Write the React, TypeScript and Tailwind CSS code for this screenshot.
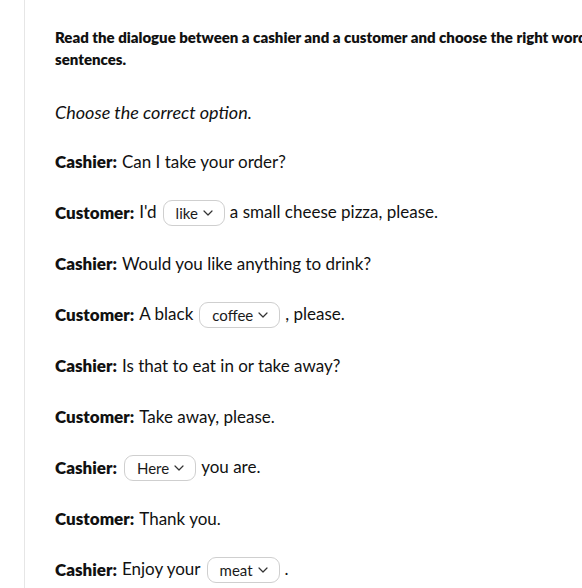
import React from "react";

function Sel({ v, first }: { v: string; first?: boolean }) {
  return (
    <span
      className={
        first
          ? "inline-flex items-center gap-[5px] h-[26px] pl-[12px] pr-[11px] ml-[2px] mr-[5px] rounded-[9px] border border-[#cfcfcf] bg-white text-[15px] text-[#1a1a1a] align-middle leading-none"
          : "inline-flex items-center gap-[5px] h-[26px] pl-[12px] pr-[11px] ml-[6px] mr-[5px] rounded-[9px] border border-[#cfcfcf] bg-white text-[15px] text-[#1a1a1a] align-middle leading-none"
      }
    >
      {v}
      <svg width="10" height="6" viewBox="0 0 10 6" fill="none">
        <path d="M1 1l4 4 4-4" stroke="#333" strokeWidth="1.2" strokeLinecap="round" strokeLinejoin="round" />
      </svg>
    </span>
  );
}

function Row({ who, children }: { who: string; children: React.ReactNode }) {
  return (
    <p className="h-[51px] flex items-center whitespace-nowrap">
      <b className="font-extrabold mr-[5px]">{who}:</b>
      <span>{children}</span>
    </p>
  );
}

export default function App() {
  return (
    <div className="w-[582px] h-[588px] overflow-hidden bg-white" style={{ fontFamily: "Lato, 'Noto Sans', sans-serif" }}>
      <div className="ml-[24px] border-l border-[#e6e6e6] h-full pl-[30px] pt-[26px] w-[760px] text-[#111]">
        <p className="font-extrabold text-[15px] leading-[22px] w-[690px]">
          Read the dialogue between a cashier and a customer and choose the right words to complete the sentences.
        </p>
        <p className="italic text-[18px] mt-[29px] mb-[10px]">Choose the correct option.</p>
        <div className="text-[17px]">
          <Row who="Cashier">Can I take your order?</Row>
          <Row who="Customer">I'd<Sel v="like" />a small cheese pizza, please.</Row>
          <Row who="Cashier">Would you like anything to drink?</Row>
          <Row who="Customer">A black<Sel v="coffee" />, please.</Row>
          <Row who="Cashier">Is that to eat in or take away?</Row>
          <Row who="Customer">Take away, please.</Row>
          <Row who="Cashier"><Sel v="Here" first />you are.</Row>
          <Row who="Customer">Thank you.</Row>
          <Row who="Cashier">Enjoy your<Sel v="meat" />.</Row>
        </div>
      </div>
    </div>
  );
}
